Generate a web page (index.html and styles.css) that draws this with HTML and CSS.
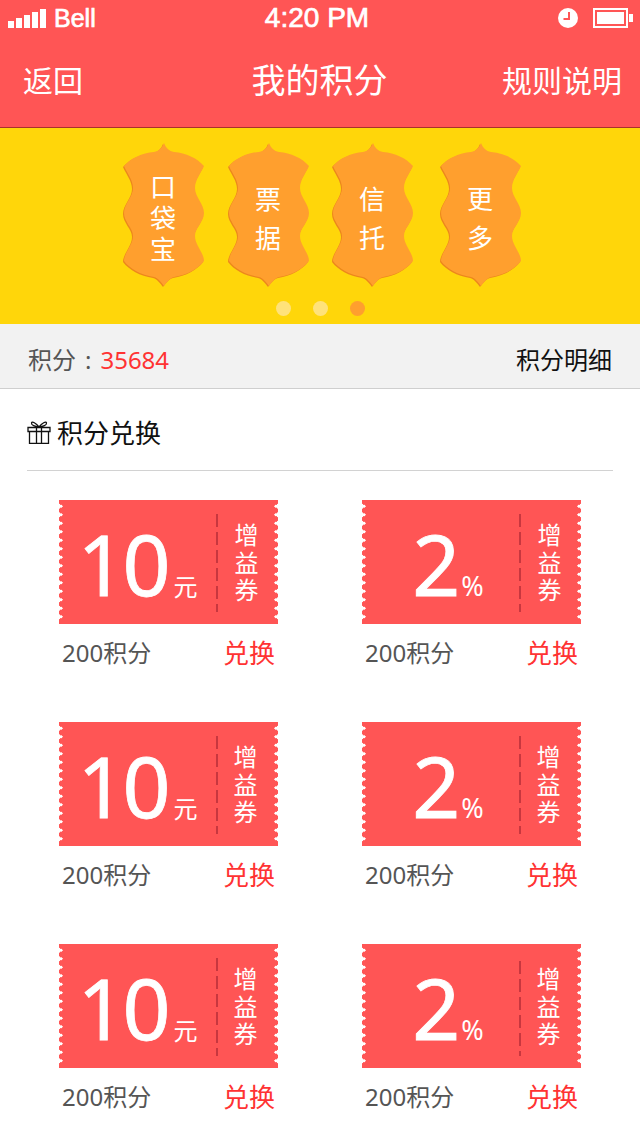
FILE: index.html
```html
<!DOCTYPE html>
<html lang="zh-CN">
<head>
    <meta charset="UTF-8">
    <meta name="viewport" content="width=device-width, initial-scale=1.0">
    <title>我的积分</title>
    <link rel="stylesheet" href="styles.css">
</head>
<body>
    <svg class="defs" width="0" height="0">
        <defs>
            <path id="badge-shape" d="M40 0C42 5 45 8 50 9C62 10 73 15 80 23C77 30 71 37 71 45C71 54 80 61 80 70C80 79 71 85 71 93C71 102 80 110 80 118C74 126 63 132 50 134C46 135 43 139 40 143C37 139 34 135 30 134C17 132 6 126 0 118C0 110 9 102 9 93C9 85 0 79 0 70C0 61 9 54 9 45C9 37 3 30 0 23C7 15 18 10 30 9C35 8 38 5 40 0Z"/>
        </defs>
    </svg>

    <header class="top">
        <div class="status">
            <div class="status-left">
                <span class="signal"><i></i><i></i><i></i><i></i><i></i></span>
                <span>Bell</span>
            </div>
            <div class="status-time">4:20 PM</div>
            <div class="status-right">
                <svg class="clock" width="20" height="20" viewBox="0 0 20 20">
                    <circle cx="10" cy="10" r="10" fill="#fff"/>
                    <path d="M11 4V11H5.500" fill="none" stroke="#ff5555" stroke-width="2"/>
                </svg>
                <svg class="battery" width="41" height="20" viewBox="0 0 41 20">
                    <rect x="1" y="1" width="33" height="18" fill="none" stroke="#fff" stroke-width="2"/>
                    <rect x="4" y="4" width="27" height="12" fill="#fff"/>
                    <rect x="36" y="6" width="4" height="8" fill="#fff"/>
                </svg>
            </div>
        </div>
        <nav class="nav">
            <a class="nav-link">返回</a>
            <h1 class="nav-title">我的积分</h1>
            <a class="nav-link nav-link-right">规则说明</a>
        </nav>
    </header>

    <section class="banner">
        <div class="badges">
            <div class="badge badge-tight">
                <svg width="80" height="144" viewBox="0 0 80 144"><use href="#badge-shape"/></svg>
                <span>口袋宝</span>
            </div>
            <div class="badge">
                <svg width="80" height="144" viewBox="0 0 80 144"><use href="#badge-shape"/></svg>
                <span>票据</span>
            </div>
            <div class="badge badge-third">
                <svg width="80" height="144" viewBox="0 0 80 144"><use href="#badge-shape"/></svg>
                <span>信托</span>
            </div>
            <div class="badge badge-last">
                <svg width="80" height="144" viewBox="0 0 80 144"><use href="#badge-shape"/></svg>
                <span>更多</span>
            </div>
        </div>
        <div class="dots">
            <i class="dot"></i><i class="dot"></i><i class="dot dot-on"></i>
        </div>
    </section>

    <div class="score">
        <div class="score-total">积分<span class="colon">:</span><b>35684</b></div>
        <a class="score-link">积分明细</a>
    </div>

    <div class="section-title">
        <svg width="24" height="24" viewBox="0 0 24 24" fill="none" stroke="#111" stroke-width="1.300">
            <path d="M1 7.500H23V11.500H1ZM2.500 11.500H21.500V23.500H2.500ZM9.500 7.500V23.500M14.500 7.500V23.500"/>
            <path d="M12 7C9 3 5 1 4.500 3C4 5 8 6.500 12 7C16 6.500 20 5 19.500 3C19 1 15 3 12 7Z"/>
        </svg>
        <span>积分兑换</span>
    </div>

    <main class="coupons">
        <div class="item">
            <div class="coupon">
                <div class="coupon-value"><span class="num">10</span><span class="unit">元</span></div>
                <div class="coupon-dash"></div>
                <div class="coupon-label">增益券</div>
            </div>
            <div class="item-foot"><span class="cost">200积分</span><a class="swap">兑换</a></div>
        </div>
        <div class="item">
            <div class="coupon">
                <div class="coupon-value coupon-value-pct"><span class="num">2</span><span class="unit">%</span></div>
                <div class="coupon-dash"></div>
                <div class="coupon-label">增益券</div>
            </div>
            <div class="item-foot"><span class="cost">200积分</span><a class="swap">兑换</a></div>
        </div>
        <div class="item">
            <div class="coupon">
                <div class="coupon-value"><span class="num">10</span><span class="unit">元</span></div>
                <div class="coupon-dash"></div>
                <div class="coupon-label">增益券</div>
            </div>
            <div class="item-foot"><span class="cost">200积分</span><a class="swap">兑换</a></div>
        </div>
        <div class="item">
            <div class="coupon">
                <div class="coupon-value coupon-value-pct"><span class="num">2</span><span class="unit">%</span></div>
                <div class="coupon-dash"></div>
                <div class="coupon-label">增益券</div>
            </div>
            <div class="item-foot"><span class="cost">200积分</span><a class="swap">兑换</a></div>
        </div>
        <div class="item">
            <div class="coupon">
                <div class="coupon-value"><span class="num">10</span><span class="unit">元</span></div>
                <div class="coupon-dash"></div>
                <div class="coupon-label">增益券</div>
            </div>
            <div class="item-foot"><span class="cost">200积分</span><a class="swap">兑换</a></div>
        </div>
        <div class="item">
            <div class="coupon">
                <div class="coupon-value coupon-value-pct"><span class="num">2</span><span class="unit">%</span></div>
                <div class="coupon-dash"></div>
                <div class="coupon-label">增益券</div>
            </div>
            <div class="item-foot"><span class="cost">200积分</span><a class="swap">兑换</a></div>
        </div>
    </main>
</body>
</html>
```

FILE: styles.css
```css
html, body {
    margin: 0;
    height: 1136px;
    overflow: hidden;
}
body {
    background: #fff;
    font-family: "Noto Sans", "Noto Sans CJK SC", sans-serif;
    color: #111;
}
.defs {
    display: block;
    height: 0;
}

/* top bar */
.top {
    height: 127px;
    background: #ff5555;
    border-bottom: 1px solid #a8322a;
    color: #fff;
}
.status {
    height: 36px;
    display: grid;
    grid-template-columns: 1fr auto 1fr;
    align-items: center;
    padding: 0 6px 0 8px;
    font-family: "Liberation Sans", sans-serif;
}
.status-left {
    display: flex;
    align-items: center;
    gap: 8px;
    font-size: 25px;
    -webkit-text-stroke: 0.7px #fff;
}
.status-time {
    -webkit-text-stroke: 0.7px #fff;
    font-size: 28px;
    margin-right: 8px;
}
.signal {
    display: flex;
    align-items: flex-end;
    gap: 2px;
    height: 19px;
}
.signal i {
    width: 6px;
    background: #fff;
}
.signal i:nth-child(1) { height: 7px; }
.signal i:nth-child(2) { height: 10px; }
.signal i:nth-child(3) { height: 13px; }
.signal i:nth-child(4) { height: 16px; }
.signal i:nth-child(5) { height: 19px; }
.status-right {
    display: flex;
    align-items: center;
    justify-content: flex-end;
    gap: 15px;
}
.nav {
    height: 85px;
    padding: 0 18px 6px 23px;
    display: grid;
    grid-template-columns: 1fr auto 1fr;
    align-items: center;
    font-family: "Noto Sans CJK SC", sans-serif;
    font-size: 30px;
}
.nav-title {
    margin: 0 6px 0 0;
    font-size: 34px;
    font-weight: normal;
}
.nav-link-right {
    text-align: right;
}

/* banner */
.banner {
    height: 196px;
    background: #ffd60a;
    overflow: hidden;
}
.badges {
    display: flex;
    gap: 25px;
    padding: 15px 0 0 124px;
}
.badge {
    width: 80px;
    height: 144px;
    position: relative;
    display: flex;
    align-items: center;
    justify-content: center;
    color: #fff;
    font-family: "Noto Sans CJK SC", sans-serif;
    font-size: 26px;
    letter-spacing: 13px;
}
.badge span {
    position: relative;
    writing-mode: vertical-rl;
    text-orientation: upright;
    margin: 19px 2px 0 0;
}
.badge svg {
    position: absolute;
    left: 0;
    top: 0;
    overflow: visible;
    fill: #ff9f2e;
    filter: drop-shadow(-0.5px 1.500px 0 #ec871c);
}
.badge-tight {
    letter-spacing: 5px;
}
.badge-tight span {
    margin-top: 10px;
}
.badge-third {
    margin-left: -1px;
}
.badge-last {
    margin-left: 3px;
}
.dots {
    display: flex;
    justify-content: center;
    gap: 22px;
    margin-top: 14px;
}
.dot {
    width: 15px;
    height: 15px;
    border-radius: 50%;
    background: #ffe27a;
}
.dot-on {
    background: #ff9f2e;
}

/* score row */
.score {
    height: 60px;
    padding: 4px 28px 0;
    background: #f2f2f2;
    border-bottom: 1px solid #cfcfcf;
    display: flex;
    align-items: center;
    justify-content: space-between;
    font-size: 24px;
}
.score-total {
    color: #555;
}
.colon {
    margin: 0 9px 0 9px;
}
.score-total b {
    font-weight: normal;
    color: #ff3333;
}

/* exchange list */
.section-title {
    height: 77px;
    padding-top: 4px;
    margin: 0 27px;
    border-bottom: 1px solid #d2d2d2;
    display: flex;
    align-items: center;
    gap: 6px;
    font-size: 26px;
}
.coupons {
    display: grid;
    grid-template-columns: 219px 219px;
    column-gap: 84px;
    row-gap: 48px;
    padding: 29px 0 0 59px;
}
.coupon {
    height: 124px;
    position: relative;
    display: flex;
    background: #ff5555;
    color: #fff;
}
.coupon::before,
.coupon::after {
    content: "";
    position: absolute;
    top: 2px;
    bottom: 3px;
    width: 4px;
    background-size: 4px 8.500px;
    background-repeat: repeat-y;
}
.coupon::before {
    left: 0;
    background-image: conic-gradient(from 233deg at 100% 50%, #fff 74deg, transparent 0);
}
.coupon::after {
    right: 0;
    background-image: conic-gradient(from 53deg at 0 50%, #fff 74deg, transparent 0);
}
.coupon-value {
    width: 157px;
    display: flex;
    align-items: baseline;
    justify-content: center;
    gap: 6px;
    line-height: 128px;
}
.coupon-value-pct {
    box-sizing: border-box;
    padding-left: 15px;
    gap: 4px;
}
.num {
    font-size: 84px;
    letter-spacing: -3px;
    -webkit-text-stroke: 0.8px #fff;
}
.unit {
    font-size: 24px;
}
.coupon-value-pct .unit {
    font-size: 27px;
}
.coupon-dash {
    width: 2px;
    margin: 14px 0 12px;
    background: repeating-linear-gradient(#c8373f 0 13px, transparent 13px 18px);
}
.item:nth-child(6) .coupon-dash {
    margin-top: 17px;
}
.coupon-label {
    flex: 1;
    box-sizing: border-box;
    padding: 5px 3px 0 0;
    display: flex;
    justify-content: center;
    align-items: center;
    writing-mode: vertical-rl;
    text-orientation: upright;
    font-family: "Noto Sans CJK SC", sans-serif;
    font-size: 24px;
    letter-spacing: 3.500px;
}
.item:nth-child(n+3) .coupon-label {
    padding-right: 5px;
}
.item-foot {
    height: 50px;
    display: flex;
    align-items: center;
    justify-content: space-between;
    padding: 4px 3px 0;
    box-sizing: border-box;
    font-size: 24px;
}
.cost {
    color: #555;
}
.swap {
    font-size: 26px;
    color: #ff3333;
    margin-top: 1px;
}
```
